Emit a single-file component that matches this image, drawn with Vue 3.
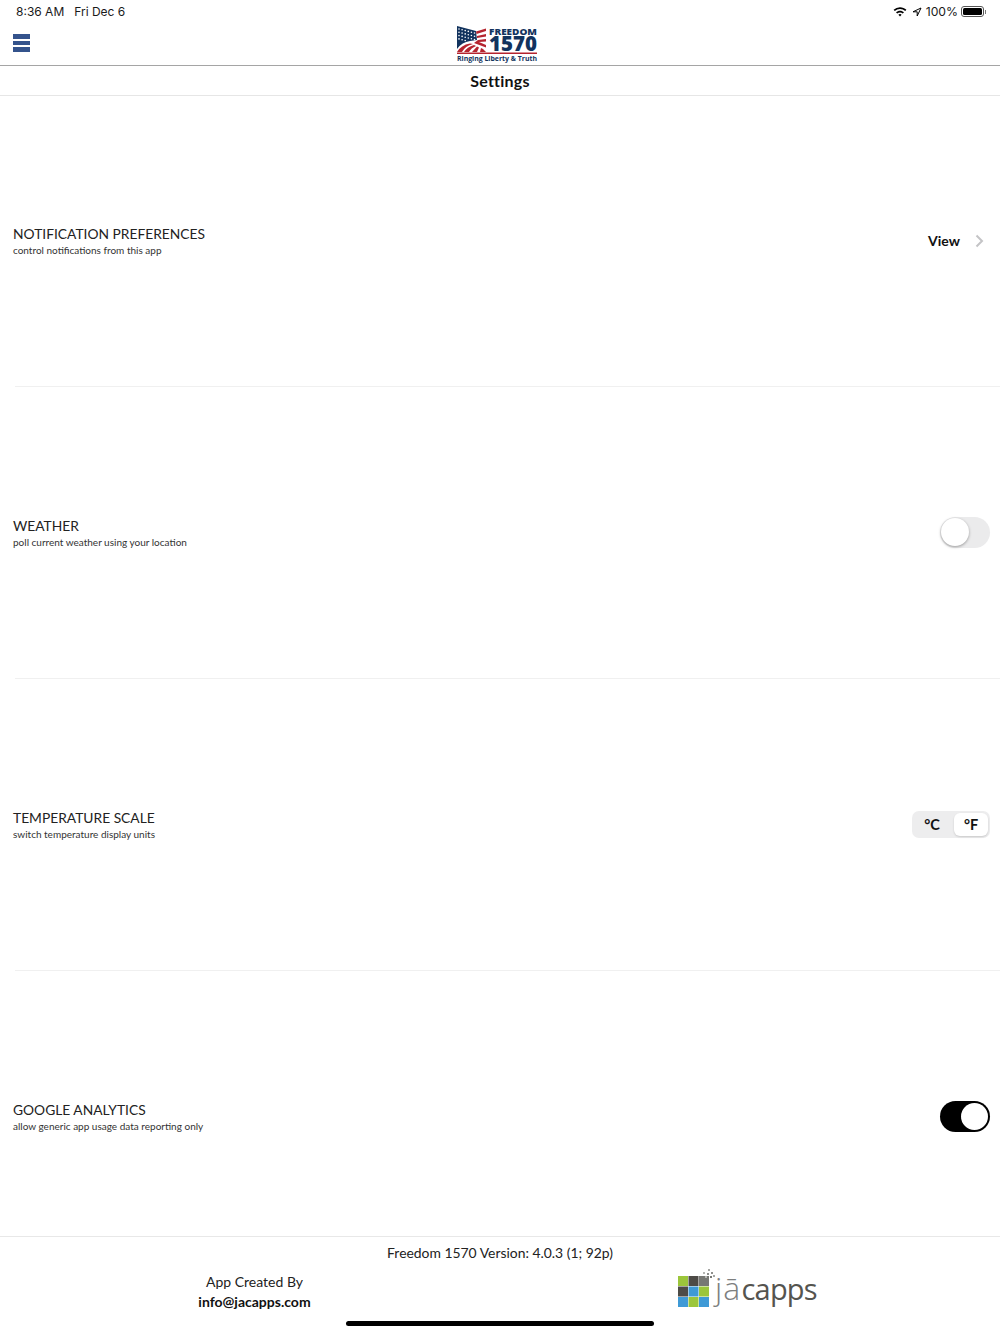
<template>
  <div class="screen">
    <div class="status-bar">
      <div class="status-left">
        <span>8:36 AM</span>
        <span>Fri Dec 6</span>
      </div>
      <div class="status-right">
        <svg class="wifi" width="14" height="11" viewBox="0 0 14 11">
          <path d="M7 1.200c2.400 0 4.700.9 6.400 2.600l-1.200 1.300A7.400 7.400 0 0 0 7 3a7.400 7.400 0 0 0-5.200 2.100L.6 3.800A9.100 9.100 0 0 1 7 1.200z" fill="#000" />
          <path d="M7 4.700c1.500 0 2.900.6 4 1.600L9.800 7.600A4.100 4.100 0 0 0 7 6.500c-1 0-2 .4-2.800 1.100L3 6.300c1.100-1 2.500-1.600 4-1.600z" fill="#000" />
          <path d="M7 8c.6 0 1.200.2 1.600.7L7 10.500 5.400 8.700C5.800 8.200 6.400 8 7 8z" fill="#000" />
        </svg>
        <svg class="arrow" width="10" height="10" viewBox="0 0 10 10">
          <path d="M9 1 1 4.800h4.200V9L9 1z" fill="none" stroke="#000" stroke-width="1" stroke-linejoin="round" />
        </svg>
        <span class="battery-text">100%</span>
        <div class="battery"><div class="battery-fill"></div></div>
        <div class="battery-cap"></div>
      </div>
    </div>

    <div class="nav-bar">
      <div class="hamburger">
        <span></span>
        <span></span>
        <span></span>
      </div>
      <svg class="logo" width="82" height="40" viewBox="0 0 82 40">
        <!-- flag -->
        <path d="M1 1 L20 6 L21 15 L14 16 Q6 17 1 24 Z" fill="#12335e" />
        <g fill="#fff">
          <circle v-for="s in stars" :key="s.x + '-' + s.y" :cx="s.x" :cy="s.y" r="0.8" />
        </g>
        <path d="M20 6.500 L30 3.500 V6 L20.500 9 Z" fill="#b5242f" />
        <path d="M21 11 L30 9 V11.500 L21 13 Z" fill="#b5242f" />
        <path d="M22 15 L30 14 V16.500 L23 17 L30 20 V22.500 L18 18 Z" fill="#b5242f" />
        <path d="M1 27 Q5 20 14 18.500 L17 19 Q9 21 6 27 Z" fill="#b5242f" />
        <path d="M8 27 Q11 22 18 20 L20 21 Q15 23 13 27 Z" fill="#b5242f" />
        <path d="M16 27 L21 21.500 L23 22.500 L21 27 Z" fill="#b5242f" />
        <path d="M24 27 L25 23 L27 24 L30 27 Z" fill="#b5242f" />
        <text x="33" y="9.500" class="logo-freedom" textLength="48" lengthAdjust="spacingAndGlyphs">FREEDOM</text>
        <text x="33" y="26" class="logo-year" textLength="48" lengthAdjust="spacingAndGlyphs">1570</text>
        <rect x="1" y="27.500" width="80" height="1.500" fill="#b5242f" />
        <text x="1" y="36" class="logo-tagline" textLength="80" lengthAdjust="spacingAndGlyphs">Ringing Liberty &amp; Truth</text>
      </svg>
    </div>

    <div class="title-bar">Settings</div>

    <div class="settings-list">
      <div class="row">
        <div class="row-text">
          <div class="row-title">NOTIFICATION PREFERENCES</div>
          <div class="row-sub">control notifications from this app</div>
        </div>
        <div class="view-link">
          <span>View</span>
          <svg width="9" height="14" viewBox="0 0 9 14">
            <path d="M1.500 1.500 7 7l-5.500 5.500" fill="none" stroke="#c4c4c6" stroke-width="2" />
          </svg>
        </div>
      </div>

      <div class="row">
        <div class="row-text">
          <div class="row-title">WEATHER</div>
          <div class="row-sub">poll current weather using your location</div>
        </div>
        <div class="switch"><div class="knob"></div></div>
      </div>

      <div class="row">
        <div class="row-text">
          <div class="row-title">TEMPERATURE SCALE</div>
          <div class="row-sub">switch temperature display units</div>
        </div>
        <div class="segment">
          <div class="seg-item">°C</div>
          <div class="seg-item active">°F</div>
        </div>
      </div>

      <div class="row">
        <div class="row-text">
          <div class="row-title">GOOGLE ANALYTICS</div>
          <div class="row-sub">allow generic app usage data reporting only</div>
        </div>
        <div class="switch on"><div class="knob"></div></div>
      </div>
    </div>

    <div class="footer">
      <div class="version">Freedom 1570 Version: 4.0.3 (1; 92p)</div>
      <div class="footer-cols">
        <div class="credit">
          <div>App Created By</div>
          <div class="credit-mail">info@jacapps.com</div>
        </div>
        <svg class="jacapps" width="140" height="44" viewBox="0 0 140 44">
          <rect v-for="c in cells" :key="c.x + '-' + c.y" :x="c.x" :y="c.y" width="10" height="10" :fill="c.fill" />
          <rect v-for="d in dots" :key="d.x + '-' + d.y" :x="d.x" :y="d.y" width="2" height="2" :fill="d.fill" />
          <text x="37" y="31" class="jac-light">jā</text>
          <text x="63.500" y="31" class="jac-dark">capps</text>
        </svg>
      </div>
      <div class="home-indicator"></div>
    </div>
  </div>
</template>

<script setup>
const green = '#9cc63b'
const dark = '#4d4b46'
const grey = '#777874'
const blue = '#3f9ad6'

const cells = [
  { x: 0, y: 7, fill: green },
  { x: 10.500, y: 7, fill: dark },
  { x: 21, y: 7, fill: grey },
  { x: 0, y: 17.500, fill: dark },
  { x: 10.500, y: 17.500, fill: blue },
  { x: 21, y: 17.500, fill: green },
  { x: 0, y: 28, fill: blue },
  { x: 10.500, y: 28, fill: green },
  { x: 21, y: 28, fill: blue },
]

const dots = [
  { x: 30, y: 0, fill: '#a5a6a3' },
  { x: 25, y: 3, fill: '#b5b6b3' },
  { x: 29, y: 4, fill: '#8f908d' },
  { x: 33, y: 3, fill: '#8f908d' },
  { x: 27, y: 7, fill: '#b5b6b3' },
  { x: 32, y: 7, fill: '#777874' },
  { x: 35, y: 6, fill: '#a5a6a3' },
]

const stars = []
for (let row = 0; row < 4; row++) {
  for (let col = 0; col < 6; col++) {
    const x = 3 + col * 3.100
    const y = 4 + row * 3.300 + col * 0.800
    if (y < 17 - col * 0.300 && x < 20) stars.push({ x, y })
  }
}
</script>

<style>
html,
body {
  margin: 0;
  background: #fff;
}
</style>

<style scoped>
.screen {
  width: 1000px;
  height: 1334px;
  overflow: hidden;
  display: flex;
  flex-direction: column;
  background: #fff;
  color: #000;
  font-family: Lato, "Open Sans", sans-serif;
}

.status-bar {
  height: 23px;
  padding: 0 14px 1px 16px;
  display: flex;
  justify-content: space-between;
  align-items: center;
  font-family: Inter, "Liberation Sans", sans-serif;
  font-size: 12px;
  color: #1a1a1a;
}

.status-left {
  display: flex;
  gap: 10px;
}

.status-right {
  display: flex;
  align-items: center;
}

.wifi {
  margin-right: 5px;
}

.arrow {
  margin-right: 4px;
}

.battery-text {
  margin-right: 3px;
  font-size: 12.200px;
}

.battery {
  width: 23px;
  height: 11px;
  box-sizing: border-box;
  border: 1px solid #555;
  border-radius: 3px;
  padding: 1px;
}

.battery-fill {
  height: 100%;
  background: #000;
  border-radius: 1.500px;
}

.battery-cap {
  width: 1px;
  height: 4px;
  margin-left: 1px;
  background: #777;
}

.nav-bar {
  height: 41px;
  box-sizing: content-box;
  border-bottom: 1px solid #a5a5a5;
  display: flex;
  align-items: flex-start;
  justify-content: center;
  position: relative;
}

.hamburger {
  position: absolute;
  left: 13px;
  top: 10px;
  display: flex;
  flex-direction: column;
  gap: 2px;
}

.hamburger span {
  display: block;
  width: 17px;
  height: 4.500px;
  background: #34538c;
}

.logo {
  margin-left: -6px;
  margin-top: 1px;
}

.logo-freedom {
  font-family: "Open Sans", sans-serif;
  font-size: 9.500px;
  font-weight: 800;
  fill: #12335e;
}

.logo-year {
  font-family: "Open Sans", sans-serif;
  font-size: 21px;
  font-weight: 800;
  fill: #12335e;
}

.logo-tagline {
  font-family: "Open Sans", sans-serif;
  font-size: 6.600px;
  font-weight: 700;
  fill: #12335e;
}

.title-bar {
  height: 29px;
  border-bottom: 1px solid #e6e6e6;
  display: flex;
  align-items: center;
  justify-content: center;
  font-size: 16px;
  font-weight: 700;
  color: #111;
  letter-spacing: 0.200px;
}

.settings-list {
  height: 1142px;
  margin-top: -1px;
  overflow: hidden;
  flex: none;
}

.row {
  height: 291px;
  box-sizing: content-box;
  margin-left: 15px;
  padding-right: 10px;
  border-bottom: 1px solid #f0f0f0;
  display: flex;
  align-items: center;
  justify-content: space-between;
}

.row-text {
  margin-left: -2px;
  padding-top: 1px;
}

.row-title {
  font-size: 13.800px;
  line-height: 18px;
  color: #222;
}

.row-sub {
  font-size: 10px;
  line-height: 14px;
  color: #333;
}

.view-link {
  display: flex;
  align-items: center;
  gap: 15px;
  padding-right: 6px;
  font-size: 14px;
  font-weight: 700;
  color: #111;
}

.switch {
  width: 50px;
  height: 31px;
  box-sizing: border-box;
  border-radius: 16px;
  background: #ebebec;
  padding: 1px;
  display: flex;
}

.switch .knob {
  width: 28px;
  height: 28px;
  border-radius: 50%;
  background: #fff;
  box-shadow: 0 1px 3px rgba(0, 0, 0, 0.35);
}

.switch.on {
  background: #000;
  justify-content: flex-end;
  padding: 2px;
}

.switch.on .knob {
  width: 27px;
  height: 27px;
  box-shadow: none;
}

.segment {
  width: 78px;
  height: 27px;
  box-sizing: border-box;
  padding: 2px;
  margin-bottom: 1px;
  border-radius: 7px;
  background: #ededee;
  display: flex;
}

.seg-item {
  width: 40px;
  box-sizing: border-box;
  padding-right: 4px;
  display: flex;
  align-items: center;
  justify-content: center;
  font-size: 14.500px;
  font-weight: 700;
  color: #111;
}

.seg-item.active {
  width: 34px;
  padding-right: 0;
  background: #fff;
  border-radius: 6px;
  box-shadow: 0 1px 2px rgba(0, 0, 0, 0.15);
}

.footer {
  flex: 1;
  position: relative;
  border-top: 1px solid #e8e8e8;
  background: #fff;
  margin-top: -1px;
}

.version {
  margin-top: 6px;
  text-align: center;
  font-size: 13.900px;
  line-height: 20px;
  color: #222;
}

.footer-cols {
  display: flex;
  margin-top: 5px;
}

.credit {
  width: 509px;
  text-align: center;
  font-size: 14px;
  line-height: 20px;
  color: #222;
  padding-top: 4px;
}

.credit-mail {
  font-weight: 700;
  color: #111;
}

.jacapps {
  margin-left: 169px;
  margin-top: 1px;
}

.jac-light {
  font-family: "Open Sans", sans-serif;
  font-size: 32px;
  font-weight: 300;
  letter-spacing: 1px;
  fill: #7d7f7f;
}

.jac-dark {
  font-family: "Open Sans", sans-serif;
  font-size: 29px;
  font-weight: 400;
  fill: #55544f;
  letter-spacing: -0.800px;
}

.home-indicator {
  position: absolute;
  left: 346px;
  bottom: 8px;
  width: 308px;
  height: 5px;
  border-radius: 3px;
  background: #000;
}
</style>
